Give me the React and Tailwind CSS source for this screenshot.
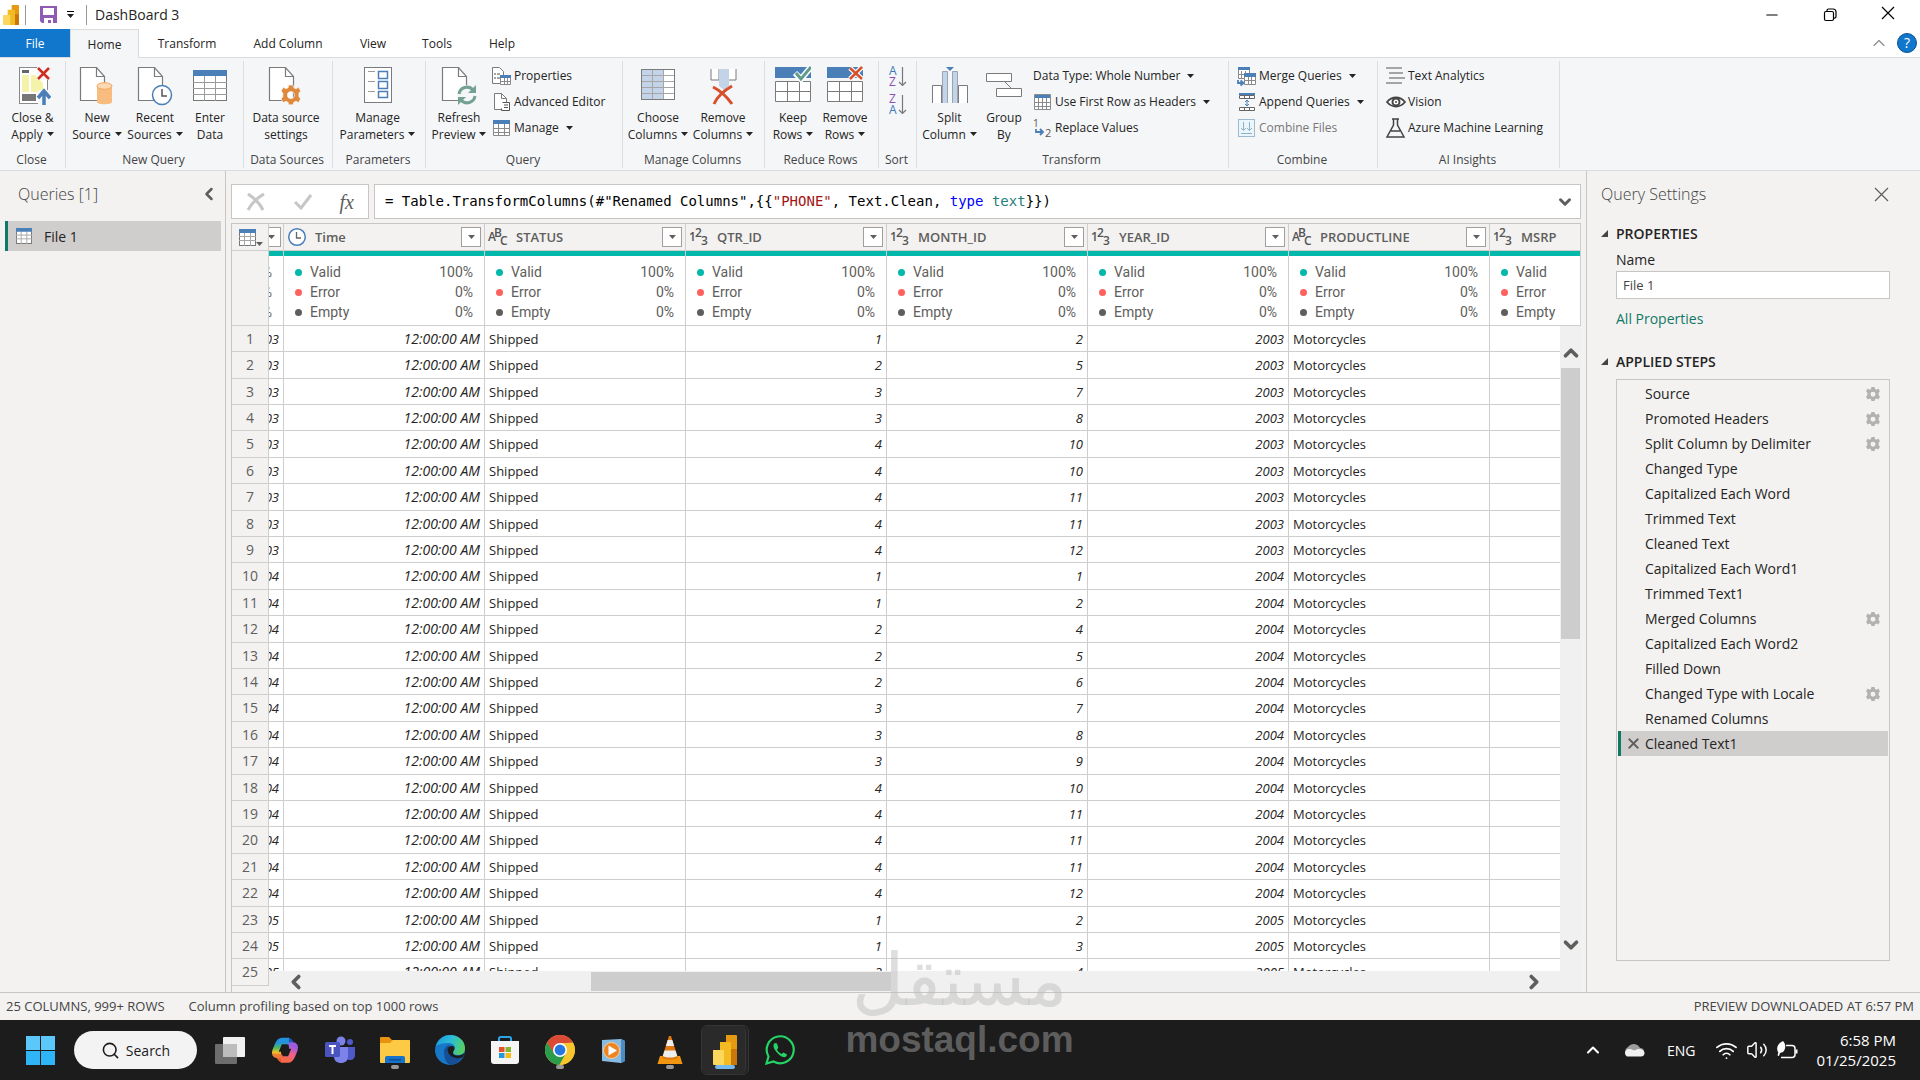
import clsx from 'clsx';
import { ChevronDown, ChevronLeft, ChevronRight, ChevronUp, Minus, Search, Volume2, Wifi, X } from 'lucide-react';

const MONTHS = [
    [1, 2, 2003], [2, 5, 2003], [3, 7, 2003], [3, 8, 2003], [4, 10, 2003],
    [4, 10, 2003], [4, 11, 2003], [4, 11, 2003], [4, 12, 2003], [1, 1, 2004],
    [1, 2, 2004], [2, 4, 2004], [2, 5, 2004], [2, 6, 2004], [3, 7, 2004],
    [3, 8, 2004], [3, 9, 2004], [4, 10, 2004], [4, 11, 2004], [4, 11, 2004],
    [4, 11, 2004], [4, 12, 2004], [1, 2, 2005], [1, 3, 2005], [2, 4, 2005],
];

const COLUMNS = [
    { name: 'Time', type: 'time' },
    { name: 'STATUS', type: 'text' },
    { name: 'QTR_ID', type: 'number' },
    { name: 'MONTH_ID', type: 'number' },
    { name: 'YEAR_ID', type: 'number' },
    { name: 'PRODUCTLINE', type: 'text' },
    { name: 'MSRP', type: 'number', last: true },
];

const STEPS = [
    { name: 'Source', gear: true },
    { name: 'Promoted Headers', gear: true },
    { name: 'Split Column by Delimiter', gear: true },
    { name: 'Changed Type' },
    { name: 'Capitalized Each Word' },
    { name: 'Trimmed Text' },
    { name: 'Cleaned Text' },
    { name: 'Capitalized Each Word1' },
    { name: 'Trimmed Text1' },
    { name: 'Merged Columns', gear: true },
    { name: 'Capitalized Each Word2' },
    { name: 'Filled Down' },
    { name: 'Changed Type with Locale', gear: true },
    { name: 'Renamed Columns' },
    { name: 'Cleaned Text1', selected: true },
];

/* ---------- small shared drawings ---------- */

function Caret({ className = '' }) {
    return (
        <svg width="7" height="4" viewBox="0 0 7 4" className={clsx('inline-block shrink-0', className)}>
            <path d="M0 0h7L3.5 4z" fill="currentColor" />
        </svg>
    );
}

function PowerBiLogo({ size }) {
    return (
        <svg width={size} height={size} viewBox="0 0 30 30">
            <path d="M16 0h10a1 1 0 0 1 1 1v28a1 1 0 0 1-1 1H16z" fill="#e59a12" />
            <path d="M21 14h6v15a1 1 0 0 1-1 1h-5z" fill="#c9760a" />
            <path d="M10 7h10a1 1 0 0 1 1 1v22H10z" fill="#f2bb22" />
            <path d="M3 15h10a1 1 0 0 1 1 1v14H4a1 1 0 0 1-1-1z" fill="#fbd75b" />
        </svg>
    );
}

function TableIcon({ size = 17 }) {
    return (
        <svg width={size} height={size} viewBox="0 0 17 17">
            <rect x="0.5" y="1.5" width="16" height="15" fill="#fff" stroke="#767676" />
            <path d="M0 7.5h17M0 11.5h17M5.5 4v13M11.5 4v13" stroke="#a6a6a6" />
            <rect width="17" height="4" fill="#4a7fb8" />
        </svg>
    );
}

function Page() {
    return (
        <>
            <path d="M1.5 1.5h16l8 9v24h-24z" fill="#fff" stroke="#7b7b7b" strokeWidth="1.2" />
            <path d="M17.5 1.5v9h8" fill="none" stroke="#7b7b7b" strokeWidth="1.2" />
        </>
    );
}

const GEAR = 'M7 0h4l.6 2.6 2 .9 2.3-1.5 2 3.4-1.6 1.9v3.4l1.6 1.9-2 3.4-2.3-1.2-2 .9L11 18H7l-.6-2.3-2-.9L2.1 16l-2-3.4 1.600-1.900V7.300L.1 5.400l2-3.400 2.300 1.500 2-.9zM9 6a3.200 3.200 0 1 0 0 6.400A3.200 3.200 0 1 0 9 6z';

function Gear({ size = 14, color = '#b3b1af' }) {
    return (
        <svg width={size} height={size} viewBox="0 0 18 18">
            <path d={GEAR} fill={color} fillRule="evenodd" />
        </svg>
    );
}

/* ---------- large ribbon drawings ---------- */

const BIG_ICONS = {
    close: (
        <>
            <rect x="4.500" y="1.500" width="28" height="36" fill="#fff" stroke="#8a8a8a" />
            <rect x="7" y="4" width="7" height="3" fill="#666" />
            <path d="M7 9h7v17H7zM16 9h4l8 8v9H16z" fill="#f5f3a9" />
            <rect x="7" y="28" width="14" height="7" fill="#777" />
            <path d="M22 0h14v14H22zM23 24h13v15H23z" fill="#f4f6f8" />
            <path d="M23 2l11 11M34 2L23 13" stroke="#d02b20" strokeWidth="2.500" />
            <path d="M29 39V26M23 32l6-7 6 7" stroke="#4a7fb8" strokeWidth="3.500" fill="none" />
        </>
    ),
    source: (
        <>
            <Page />
            <path d="M18 20v16c0 3 15 3 15 0V20" fill="#f8bd7e" />
            <ellipse cx="25.500" cy="20" rx="7.500" ry="3.300" fill="#fbd9b3" stroke="#f2a65c" />
        </>
    ),
    recent: (
        <>
            <Page />
            <circle cx="25" cy="29" r="9.500" fill="#fff" stroke="#4a7fb8" strokeWidth="1.500" />
            <path d="M25 23v7h5" stroke="#555" strokeWidth="1.500" fill="none" />
        </>
    ),
    enter: (
        <>
            <rect x="1.500" y="5.500" width="33" height="29" fill="#fff" stroke="#767676" />
            <path d="M1 16.500h34M1 22.500h34M1 28.500h34M12.500 10v25M23.500 10v25" stroke="#9b9b9b" />
            <rect x="1" y="4" width="34" height="6" fill="#4a7fb8" />
        </>
    ),
    gear: (
        <>
            <Page />
            <path d={GEAR} fill="#e0893a" fillRule="evenodd" transform="translate(13 19) scale(1.1)" stroke="#f4f6f8" strokeWidth="0.600" />
        </>
    ),
    params: (
        <>
            <rect x="4.500" y="1.500" width="27" height="35" fill="#fff" stroke="#7b7b7b" />
            <path d="M8 5.500h7M8 15.500h7M8 25.500h7" stroke="#9b9b9b" />
            <path d="M18.500 5.500h9v7h-9zM18.500 15.500h9v7h-9zM18.500 25.500h9v6h-9z" fill="#fff" stroke="#4a7fb8" strokeWidth="1.500" />
        </>
    ),
    refresh: (
        <>
            <Page />
            <circle cx="26" cy="29" r="10" fill="#f4f6f8" />
            <path d="M18 28a8 8 0 0 1 14-4M34 30a8 8 0 0 1-14 4" stroke="#74a191" strokeWidth="3" fill="none" />
            <path d="M35 19v8h-8zM17 39v-8h8z" fill="#74a191" />
        </>
    ),
    choose: (
        <>
            <rect x="1.500" y="3.500" width="33" height="30" fill="#fff" stroke="#7b7b7b" />
            <path d="M2 4h22v29H2z" fill="#c3d4e8" />
            <path d="M2 9.500h32M2 15.500h32M2 21.500h32M2 27.500h32M12.500 4v29M23.500 4v29" stroke="#a6a6a6" />
            <rect x="1.500" y="3.500" width="33" height="30" fill="none" stroke="#7b7b7b" />
        </>
    ),
    removeCols: (
        <>
            <path d="M6 3v11h8V3M31 3v11h-8V3" fill="#fff" stroke="#7b7b7b" />
            <path d="M14 3h10v17l-5 4-5-4z" fill="#c3d4e8" />
            <path d="M8 21c6 3 14 10 19 17M27 20C20 24 12 31 9 38" stroke="#d6502c" strokeWidth="3" fill="none" />
        </>
    ),
    keepRows: (
        <>
            <rect x="0" y="1" width="36" height="11" fill="#4a7fb8" />
            <path d="M.5 15.500h35v20H.5zM.5 25.500h35M12.500 15.500v20M24.500 15.500v20" fill="#fff" stroke="#7b7b7b" />
            <path d="M20 7l6 6L36 1" stroke="#fff" strokeWidth="6" fill="none" />
            <path d="M21 7l5 6L36 1" stroke="#5f9c8a" strokeWidth="3" fill="none" />
        </>
    ),
    removeRows: (
        <>
            <rect x="0" y="1" width="36" height="11" fill="#4a7fb8" />
            <path d="M.5 15.500h35v20H.5zM.5 25.500h35M12.500 15.500v20M24.500 15.500v20" fill="#fff" stroke="#7b7b7b" />
            <path d="M23 2l12 11M35 1L23 13" stroke="#fff" strokeWidth="5" fill="none" />
            <path d="M23 2l12 11M35 1L23 13" stroke="#d6502c" strokeWidth="2.500" fill="none" />
        </>
    ),
    split: (
        <>
            <path d="M.5 37V19.500h9V37M35.500 37V19.500h-9V37" fill="#fff" stroke="#7b7b7b" />
            <path d="M10.500 37V5.500h5V37M20.500 37V5.500h5V37" fill="#c3d4e8" stroke="#9aa5b1" />
            <path d="M14 1h8l-4 4z" fill="#4a7fb8" />
        </>
    ),
    group: (
        <>
            <path d="M.5 7.500h25v8H.5zM10.500 22.500h25v8h-25z" fill="#fff" stroke="#7b7b7b" />
            <path d="M19 16l6 6" stroke="#7b7b7b" />
        </>
    ),
};

/* ---------- small ribbon drawings ---------- */

const SMALL_ICONS = {
    props: (
        <>
            <path d="M.5.5h7l4 4v12H.5z" fill="#fff" stroke="#7b7b7b" />
            <path d="M2 7h2M2 11h2M5 7h3M5 11h3" stroke="#888" strokeWidth="1.500" />
            <path d="M8.500 9.500h10v8h-10zM8 14.500h10M12.500 11v7M15.500 11v7" fill="#fff" stroke="#8a8a8a" />
            <path d="M8 8h11v3H8z" fill="#4a7fb8" />
        </>
    ),
    editor: (
        <>
            <path d="M2.500.5h7l5 5v11h-12z" fill="#fff" stroke="#7b7b7b" />
            <path d="M9.500.5v5h5" fill="none" stroke="#7b7b7b" />
            <path d="M10.500 9.500h7v8h-8v-2" fill="#fff" stroke="#555" />
            <path d="M12 12h4M12 14.500h4" stroke="#555" />
        </>
    ),
    manage: (
        <>
            <path d="M1.500 3.500h16v13h-16zM1 9.500h17M1 13.500h17M6.500 4v13M12.500 4v13" fill="#fff" stroke="#8a8a8a" />
            <path d="M1 1h17v4H1z" fill="#4a7fb8" />
        </>
    ),
    headers: (
        <>
            <path d="M1.500 1.500h16v15h-16zM1 9.500h17M1 13.500h17M5.500 4v13M9.500 4v13M13.500 4v13" fill="#fff" stroke="#8a8a8a" />
            <path d="M2 2h15v3H2z" fill="#4a7fb8" />
        </>
    ),
    replace: (
        <>
            <text x="0" y="8" fontSize="10" fill="#555">1</text>
            <text x="12" y="18" fontSize="11" fill="#555">2</text>
            <path d="M3 10v3h6M7 10l3 3-3 3" fill="none" stroke="#4a7fb8" strokeWidth="1.800" />
        </>
    ),
    merge: (
        <>
            <path d="M1.500 2.500h11v9h-11zM1 7.500h11M4.500 4v8M8.500 4v8" fill="#fff" stroke="#8a8a8a" />
            <path d="M1 0h12v3H1z" fill="#4a7fb8" />
            <path d="M7.500 8.500h11v9h-11zM7 13.500h12M11.500 8v9M14.500 8v9" fill="#fff" stroke="#8a8a8a" />
            <path d="M7 6h12v4H7z" fill="#4a7fb8" />
            <path d="M1 13v3h4M3.500 13.500l3 2.500-3 2.500" fill="none" stroke="#4a7fb8" strokeWidth="1.800" />
        </>
    ),
    append: (
        <>
            <path d="M2.500 2.500h15v3h-15zM2.500 14.500h15v3h-15zM7.500 2v4M12.500 2v4M7.500 14v4M12.500 14v4" fill="#fff" stroke="#666" />
            <path d="M2 0h16v2H2z" fill="#4a7fb8" />
            <path d="M10 7v6M8 9l2-2 2 2M8 11l2 2 2-2" fill="none" stroke="#4a7fb8" />
        </>
    ),
    combine: (
        <>
            <rect x="1.500" y="0.500" width="16" height="17" fill="#eaf5fc" stroke="#9db9cc" />
            <path d="M6.500 3v8M12.500 3v8M4 9l2.500 2.500L9 9M10 9l2.500 2.500L15 9M4 14.500h11" fill="none" stroke="#8fb0c6" />
        </>
    ),
    text: <path d="M0 1h16M3 6h14M3 11h16M0 16h16" stroke="#8a8a8a" strokeWidth="1.500" />,
    vision: (
        <>
            <path d="M1 9c5-6 13-6 18 0-5 6-13 6-18 0z" fill="#fff" stroke="#444" strokeWidth="1.800" />
            <circle cx="10" cy="9" r="3.500" fill="#fff" stroke="#444" strokeWidth="2" />
            <circle cx="10" cy="9" r="1" fill="#444" />
        </>
    ),
    flask: (
        <path d="M6 0h7M7.500 0v6L1 18h17L11.500 6V0M5 12h9" fill="none" stroke="#444" strokeWidth="1.500" />
    ),
};

function BigButton({ icon, lines, caret, className = 'w-14' }) {
    return (
        <button type="button" className={clsx('flex flex-col items-center pt-[3px]', className)}>
            <svg width="36" height="40" viewBox="0 0 36 40" className="mb-[3px]">
                {BIG_ICONS[icon]}
            </svg>
            <span className="leading-[17px] whitespace-nowrap">{lines[0]}</span>
            <span className="flex items-center gap-1 leading-[17px] whitespace-nowrap">
                {lines[1]}
                {caret && <Caret />}
            </span>
        </button>
    );
}

function SmallButton({ icon, label, caret, disabled }) {
    return (
        <button
            type="button"
            disabled={disabled}
            className={clsx('flex h-[26px] items-center gap-[3px] whitespace-nowrap', disabled && 'text-[#797775]')}
        >
            {icon && (
                <svg width="19" height="18" viewBox="0 0 19 18" className="overflow-visible">
                    {SMALL_ICONS[icon]}
                </svg>
            )}
            {label}
            {caret && <Caret className="ml-1" />}
        </button>
    );
}

function Group({ label, className, align = 'justify-center', children }) {
    return (
        <section className={clsx('flex h-[107px] flex-col border-r border-[#dcdee0]', className)}>
            <div className={clsx('flex flex-1 pt-0.5', align)}>{children}</div>
            <div className="flex h-4 items-center justify-center pr-0.5 leading-4 whitespace-nowrap text-[#444]">{label}</div>
        </section>
    );
}

function SortIcon({ first, second, firstColor, secondColor }) {
    return (
        <svg width="18" height="22" viewBox="0 0 18 22" fontSize="12">
            <text x="0" y="9" fill={firstColor}>{first}</text>
            <text x="0" y="20" fill={secondColor}>{second}</text>
            <path d="M13.500 1v18M10 16l3.500 3.500L17 16" fill="none" stroke="#777" strokeWidth="1.200" />
        </svg>
    );
}

function TitleBar() {
    return (
        <header className="flex h-[29px] items-center bg-white pr-[3px] pl-px">
            <PowerBiLogo size={20} />
            <span className="ml-1 h-5 w-px bg-[#999]" />
            <button type="button" aria-label="Save" className="ml-3.5">
                <svg width="17" height="17" viewBox="0 0 17 17">
                    <path d="M0 0h17v17H2l-2-2z" fill="#8e5bb5" />
                    <path d="M3 2h11v7H3zM4 12h9v5h-2v-3H8v3H4z" fill="#fff" />
                </svg>
            </button>
            <button type="button" aria-label="Customize toolbar" className="ml-2.5 flex flex-col items-center gap-0.5">
                <span className="h-px w-[7px] bg-black" />
                <Caret />
            </button>
            <span className="ml-3 h-5 w-px bg-[#999]" />
            <h1 className="ml-2 text-[14px]">DashBoard 3</h1>
            <div className="ml-auto flex">
                <button type="button" aria-label="Minimize" className="flex w-[58px] justify-center">
                    <Minus size={18} strokeWidth={1.4} color="#000" />
                </button>
                <button type="button" aria-label="Restore" className="flex w-[58px] items-center justify-center">
                    <svg width="14" height="14" viewBox="0 0 14 14" fill="none" stroke="#000" strokeWidth="1.200">
                        <rect x="1.500" y="3.500" width="9" height="9" rx="1.500" />
                        <path d="M4 3.500V2.500a1.500 1.500 0 0 1 1.500-1.500H10a3 3 0 0 1 3 3v4.500A1.500 1.500 0 0 1 11 10" />
                    </svg>
                </button>
                <button type="button" aria-label="Close" className="flex w-[58px] justify-center">
                    <svg width="14" height="14" viewBox="0 0 14 14">
                        <path d="M1 1l12 12M13 1L1 13" stroke="#000" strokeWidth="1.200" />
                    </svg>
                </button>
            </div>
        </header>
    );
}

function Tabs() {
    const tab = 'flex h-full items-center justify-center pt-0.5';
    return (
        <nav className="flex h-[29px] items-stretch border-b border-[#d9dbdd] bg-white">
            <button type="button" className={clsx(tab, 'w-[70px] bg-[#1177cc] text-white')}>File</button>
            <div className="-mb-px flex h-[29px]">
                <button type="button" className={clsx(tab, 'w-[69px] border-x border-t border-[#d9dbdd] bg-[#f4f6f8]')}>Home</button>
            </div>
            <button type="button" className={clsx(tab, 'w-[96px]')}>Transform</button>
            <button type="button" className={clsx(tab, 'w-[106px]')}>Add Column</button>
            <button type="button" className={clsx(tab, 'w-[64px]')}>View</button>
            <button type="button" className={clsx(tab, 'w-[64px]')}>Tools</button>
            <button type="button" className={clsx(tab, 'w-[66px]')}>Help</button>
            <div className="ml-auto flex items-center gap-2 pr-[3px]">
                <ChevronUp size={20} strokeWidth={1.3} className="text-[#888]" />
                <button type="button" className="size-5 rounded-full border border-[#0b4f94] bg-[#1177cc] text-[14px] leading-[18px] text-white">?</button>
            </div>
        </nav>
    );
}

function Ribbon() {
    return (
        <div className="flex h-[113px] items-center border-b border-[#d9dbdd] bg-[#f4f6f8]">
            <Group label="Close" className="w-[66px]">
                <BigButton icon="close" lines={['Close &', 'Apply']} caret />
            </Group>
            <Group label="New Query" className="w-[178px]" align="justify-start">
                <BigButton icon="source" lines={['New', 'Source']} caret className="w-[62px]" />
                <BigButton icon="recent" lines={['Recent', 'Sources']} caret className="w-[54px]" />
                <BigButton icon="enter" lines={['Enter', 'Data']} />
            </Group>
            <Group label="Data Sources" className="w-[89px]" align="justify-start">
                <BigButton icon="gear" lines={['Data source', 'settings']} className="w-[84px]" />
            </Group>
            <Group label="Parameters" className="w-[93px]" align="justify-start">
                <BigButton icon="params" lines={['Manage', 'Parameters']} caret className="w-[89px]" />
            </Group>
            <Group label="Query" className="w-[197px]" align="justify-start">
                <BigButton icon="refresh" lines={['Refresh', 'Preview']} caret className="w-[66px]" />
                <div>
                    <SmallButton icon="props" label="Properties" />
                    <SmallButton icon="editor" label="Advanced Editor" />
                    <SmallButton icon="manage" label="Manage" caret />
                </div>
            </Group>
            <Group label="Manage Columns" className="w-[142px]" align="justify-start">
                <BigButton icon="choose" lines={['Choose', 'Columns']} caret className="w-[70px]" />
                <BigButton icon="removeCols" lines={['Remove', 'Columns']} caret className="w-[60px]" />
            </Group>
            <Group label="Reduce Rows" className="w-[114px]" align="justify-start">
                <BigButton icon="keepRows" lines={['Keep', 'Rows']} caret />
                <BigButton icon="removeRows" lines={['Remove', 'Rows']} caret className="w-12" />
            </Group>
            <Group label="Sort" className="w-[38px]">
                <div className="flex flex-col gap-1.5 pt-[3px]">
                    <button type="button" aria-label="Sort ascending" className="h-[22px]">
                        <SortIcon first="A" second="Z" firstColor="#3f78b5" secondColor="#8e4fb0" />
                    </button>
                    <button type="button" aria-label="Sort descending" className="h-[22px]">
                        <SortIcon first="Z" second="A" firstColor="#8e4fb0" secondColor="#3f78b5" />
                    </button>
                </div>
            </Group>
            <Group label="Transform" className="w-[312px]" align="justify-start">
                <BigButton icon="split" lines={['Split', 'Column']} caret className="w-[65px]" />
                <BigButton icon="group" lines={['Group', 'By']} className="w-11" />
                <div className="ml-[7px]">
                    <SmallButton label="Data Type: Whole Number" caret />
                    <SmallButton icon="headers" label="Use First Row as Headers" caret />
                    <SmallButton icon="replace" label="Replace Values" />
                </div>
            </Group>
            <Group label="Combine" className="w-[149px]" align="justify-start">
                <div className="ml-2">
                    <SmallButton icon="merge" label="Merge Queries" caret />
                    <SmallButton icon="append" label="Append Queries" caret />
                    <SmallButton icon="combine" label="Combine Files" disabled />
                </div>
            </Group>
            <Group label="AI Insights" className="w-[182px]" align="justify-start">
                <div className="ml-2">
                    <SmallButton icon="text" label="Text Analytics" />
                    <SmallButton icon="vision" label="Vision" />
                    <SmallButton icon="flask" label="Azure Machine Learning" />
                </div>
            </Group>
        </div>
    );
}

function QueriesPane() {
    return (
        <aside className="w-[226px] shrink-0 border-r border-[#c8c6c4]">
            <div className="flex h-[50px] items-center justify-between pr-1.5 pb-1 pl-[18px]">
                <h2 className="text-[16px] font-light text-[#444]">Queries [1]</h2>
                <ChevronLeft size={20} strokeWidth={3} className="text-[#605e5c]" />
            </div>
            <button type="button" className="ml-[5px] flex h-[30px] w-[216px] items-center gap-3 border-l-3 border-[#117865] bg-[#d0cecd] pl-2 text-[14px]">
                <TableIcon size={16} />
                File 1
            </button>
        </aside>
    );
}

function FormulaBar() {
    return (
        <div className="flex h-[35px] gap-[5px]">
            <div className="flex w-[138px] items-center justify-between border border-[#c8c6c4] bg-white px-3.5">
                <button type="button" aria-label="Cancel">
                    <svg width="20" height="18" viewBox="0 0 20 18">
                        <path d="M2 1c6 4 12 10 15 16M18 1C11 5 5 11 2 17" fill="none" stroke="#c8c6c4" strokeWidth="3" />
                    </svg>
                </button>
                <button type="button" aria-label="Commit">
                    <svg width="18" height="18" viewBox="0 0 18 18">
                        <path d="M1 9l6 6L17 2" fill="none" stroke="#c8c6c4" strokeWidth="3" />
                    </svg>
                </button>
                <button type="button" aria-label="Insert step" className="font-['Liberation_Serif',serif] text-[20px] leading-6 text-[#605e5c] italic">fx</button>
            </div>
            <div className="flex flex-1 items-center justify-between border border-[#c8c6c4] bg-white pr-1.5 pl-2.5">
                <code className="font-['DejaVu_Sans_Mono',monospace] text-[14px] whitespace-pre text-black">
                    {'= Table.TransformColumns(#"Renamed Columns",{{'}
                    <span className="text-[#a31515]">"PHONE"</span>
                    {', Text.Clean, '}
                    <span className="text-[#0000ff]">type</span>
                    <span className="text-[#267f79]"> text</span>
                    {'}})'}
                </code>
                <ChevronDown size={18} strokeWidth={4} className="text-[#605e5c]" />
            </div>
        </div>
    );
}

function TypeIcon({ type }) {
    if (type === 'time') {
        return (
            <svg width="20" height="20" viewBox="0 0 20 20">
                <circle cx="10" cy="10" r="8.300" fill="#fff" stroke="#4a7fb8" strokeWidth="1.500" />
                <path d="M9.500 5v6H14" fill="none" stroke="#666" strokeWidth="1.300" />
            </svg>
        );
    }
    const chars = type === 'text' ? ['A', 'B', 'C'] : ['1', '2', '3'];
    return (
        <svg width="20" height="20" viewBox="0 0 20 20" fontSize="12" fontWeight="600" fill="#555">
            <text x="0" y="14">{chars[0]}</text>
            <text x="6" y="10">{chars[1]}</text>
            <text x="12" y="18">{chars[2]}</text>
        </svg>
    );
}

function FilterButton() {
    return (
        <button type="button" aria-label="Filter" className="flex h-5 w-5 shrink-0 items-center justify-center border border-[#a19f9d] bg-white text-[#605e5c]">
            <Caret />
        </button>
    );
}

function Quality({ last }) {
    const rows = [
        ['Valid', '100%', 'bg-[#01b8aa]'],
        ['Error', '0%', 'bg-[#fd625e]'],
        ['Empty', '0%', 'bg-[#605e5c]'],
    ];
    return (
        <div className="border-t-5 border-[#01b8aa] pt-1.5 pr-[11px] pl-[11px]">
            {rows.map(([label, value, color]) => (
                <div key={label} className="flex h-5 items-center">
                    <span className={clsx('mr-2 size-[7px] rounded-full', color)} />
                    <span>{label}</span>
                    {!last && <span className="ml-auto">{value}</span>}
                </div>
            ))}
        </div>
    );
}

function DataGrid() {
    const cell = 'border-r border-b border-[#d0cecd] p-0';
    const clipped = 'flex justify-end overflow-hidden whitespace-nowrap';
    return (
        <div className="relative mt-1 min-h-0 flex-1 overflow-hidden border-t border-l border-[#c8c6c4]">
            <table className="w-full table-fixed border-separate border-spacing-0 text-[13px] leading-5 text-[#252423]">
                <colgroup>
                    <col className="w-[37px]" />
                    <col className="w-[15px]" />
                    <col className="w-[201px]" />
                    <col className="w-[201px]" />
                    <col className="w-[201px]" />
                    <col className="w-[201px]" />
                    <col className="w-[201px]" />
                    <col className="w-[201px]" />
                    <col />
                </colgroup>
                <thead>
                    <tr className="h-[27px] text-[#605e5c]">
                        <td className={cell}>
                            <button type="button" aria-label="Table menu" className="flex w-full items-end justify-center pl-0.5 text-[#605e5c]">
                                <TableIcon size={17} />
                                <Caret />
                            </button>
                        </td>
                        <td className={cell}>
                            <div className={clsx(clipped, 'pr-0.5')}><FilterButton /></div>
                        </td>
                        {COLUMNS.map((col) => (
                            <th key={col.name} scope="col" className={clsx(cell, 'text-left font-semibold')}>
                                <div className="flex items-center gap-2 pr-[3px] pl-[3px]">
                                    <TypeIcon type={col.type} />
                                    <span className="flex-1">{col.name}</span>
                                    {!col.last && <FilterButton />}
                                </div>
                            </th>
                        ))}
                    </tr>
                    <tr className="h-[75px] bg-white align-top font-[Roboto] text-[14px] text-[#605e5c]">
                        <td className={clsx(cell, 'bg-[#f3f2f1]')} />
                        <td className={cell}>
                            <div className="border-t-5 border-[#01b8aa] pt-1.5 pr-[11px]">
                                <div className={clipped}>%</div>
                                <div className={clipped}>%</div>
                                <div className={clipped}>%</div>
                            </div>
                        </td>
                        {COLUMNS.map((col) => (
                            <td key={col.name} className={cell}><Quality last={col.last} /></td>
                        ))}
                    </tr>
                </thead>
                <tbody className="bg-white">
                    {MONTHS.map(([qtr, month, year], i) => (
                        <tr key={i} className={clsx(i % 5 === 1 || i % 5 === 4 ? 'h-[27px]' : 'h-[26px]')}>
                            <th scope="row" className={clsx(cell, 'bg-[#f3f2f1] text-center text-[14px] font-normal text-[#605e5c]')}>{i + 1}</th>
                            <td className={clsx(cell, 'italic')}>
                                <div className={clsx(clipped, 'pr-1')}>{String(year).slice(2)}</div>
                            </td>
                            <td className={clsx(cell, 'pr-1 text-right text-[14px] italic')}>12:00:00 AM</td>
                            <td className={clsx(cell, 'pl-1')}>Shipped</td>
                            <td className={clsx(cell, 'pr-1 text-right italic')}>{qtr}</td>
                            <td className={clsx(cell, 'pr-1 text-right italic')}>{month}</td>
                            <td className={clsx(cell, 'pr-1 text-right italic')}>{year}</td>
                            <td className={clsx(cell, 'pl-1')}>Motorcycles</td>
                            <td className={cell} />
                        </tr>
                    ))}
                </tbody>
            </table>

            {/* Scroll bars lie over the last rows and the right edge */}
            <div className="absolute top-[102px] right-0 bottom-5 flex w-[21px] flex-col items-center bg-[#f0f0f0] pt-4 text-[#605e5c]">
                <ChevronUp size={22} strokeWidth={4} />
                <div className="mt-1 h-[271px] w-[19px] bg-[#cdcdcd]" />
                <ChevronDown size={22} strokeWidth={4} className="mt-auto mb-4" />
            </div>
            <div className="absolute right-0 bottom-0 left-[37px] flex h-[21px] items-center bg-[#f0f0f0] pr-9 pl-4 text-[#605e5c]">
                <ChevronLeft size={22} strokeWidth={4} />
                <div className="ml-[284px] h-[19px] w-[300px] bg-[#cdcdcd]" />
                <ChevronRight size={22} strokeWidth={4} className="ml-auto" />
            </div>
        </div>
    );
}

function SectionTitle({ children }) {
    return (
        <h3 className="flex h-5 items-center gap-2 text-[14px] font-semibold text-[#252423]">
            <svg width="7" height="7" viewBox="0 0 7 7">
                <path d="M7 0v7H0z" fill="#444" />
            </svg>
            {children}
        </h3>
    );
}

function SettingsPane() {
    return (
        <aside className="flex w-[334px] shrink-0 flex-col border-l border-[#c8c6c4] pl-3.5 text-[14px]">
            <div className="flex h-[50px] items-center justify-between pr-[31px] pb-1">
                <h2 className="text-[16px] font-light text-[#444]">Query Settings</h2>
                <button type="button" aria-label="Close settings">
                    <svg width="15" height="15" viewBox="0 0 15 15">
                        <path d="M1 1l13 13M14 1L1 14" stroke="#605e5c" strokeWidth="1.200" />
                    </svg>
                </button>
            </div>
            <div className="mt-0.5 flex flex-1 flex-col pb-[31px]">
                <SectionTitle>PROPERTIES</SectionTitle>
                <div className="mr-[30px] ml-[15px] flex flex-col items-start">
                    <label htmlFor="query-name" className="mt-[7px] mb-px leading-5">Name</label>
                    <input
                        id="query-name"
                        type="text"
                        defaultValue="File 1"
                        className="h-7 w-full border border-[#c8c6c4] bg-white px-1.5 text-[13px] text-[#444]"
                    />
                    <a href="#all" className="mt-2.5 leading-5 text-[#117865]">All Properties</a>
                </div>
                <div className="mt-[22px] mb-2">
                    <SectionTitle>APPLIED STEPS</SectionTitle>
                </div>
                <ul className="mr-[30px] ml-[15px] flex-1 border border-[#c8c6c4] p-px">
                    {STEPS.map((step) => (
                        <li
                            key={step.name}
                            className={clsx(
                                'flex h-[25px] items-center border-l-3 pr-2',
                                step.selected ? 'border-[#117865] bg-[#d0cecd]' : 'border-transparent',
                            )}
                        >
                            <span className="flex w-6 justify-center">
                                {step.selected && <X size={17} strokeWidth={2.5} className="text-[#605e5c]" />}
                            </span>
                            {step.name}
                            {step.gear && <span className="ml-auto"><Gear /></span>}
                        </li>
                    ))}
                </ul>
            </div>
        </aside>
    );
}

/* ---------- task bar ---------- */

const APPS = [
    {
        name: 'Task view',
        art: (
            <>
                <rect x="8" y="2" width="22" height="20" rx="1" fill="#f1f1f1" />
                <rect x="0" y="9" width="22" height="20" rx="1" fill="#6d6d6d" />
                <rect x="8" y="9" width="14" height="13" fill="#bdbdbd" />
            </>
        ),
    },
    {
        name: 'Copilot',
        art: (
            <>
                <defs>
                    <linearGradient id="copilotLeft" x1="0" y1="0" x2="0" y2="1">
                        <stop offset="0.100" stopColor="#2390e0" />
                        <stop offset="0.500" stopColor="#4fb85c" />
                        <stop offset="0.800" stopColor="#f0c32a" />
                        <stop offset="1" stopColor="#ee7a35" />
                    </linearGradient>
                    <linearGradient id="copilotRight" x1="0.800" y1="0" x2="0.300" y2="1">
                        <stop offset="0" stopColor="#9a5be0" />
                        <stop offset="0.500" stopColor="#f0608c" />
                        <stop offset="1" stopColor="#f5694a" />
                    </linearGradient>
                </defs>
                <g fill="none" strokeWidth="6.500" strokeLinejoin="round">
                    <path d="M18 6c2.500 0 2.500 4 5 5" stroke="#1c54b8" />
                    <path d="M7 20c3 0 3 4 5 4.500" stroke="#e8582f" />
                    <path d="M19 6h-7c-2 0-3 1.500-4 4l-2.500 6c-1 3 0 4 2 4H11" stroke="url(#copilotLeft)" />
                    <path d="M11 24.500h7c2 0 3-1.500 4-4l2.500-6c1-3 0-4-2-4H19" stroke="url(#copilotRight)" />
                </g>
            </>
        ),
    },
    {
        name: 'Teams',
        art: (
            <>
                <circle cx="25" cy="7" r="3" fill="#5059c9" />
                <path d="M20 12h10v8c0 3-2 5-5 5s-5-2-5-5z" fill="#5059c9" />
                <circle cx="16" cy="6" r="4.500" fill="#7b83eb" />
                <path d="M9 12h14v9c0 5-3 7-7 7s-7-2-7-7z" fill="#7b83eb" />
                <rect x="0" y="7" width="15" height="15" rx="1.500" fill="#4b53bc" />
                <path d="M4 11h7M7.500 11v8" stroke="#fff" strokeWidth="2" />
            </>
        ),
    },
    {
        name: 'File Explorer',
        running: true,
        art: (
            <>
                <path d="M0 3a1 1 0 0 1 1-1h8l3 3h17a1 1 0 0 1 1 1v6H0z" fill="#e8930f" />
                <path d="M0 8h10l3-3h16a1 1 0 0 1 1 1v21a1 1 0 0 1-1 1H1a1 1 0 0 1-1-1z" fill="#fcca45" />
                <path d="M5 28v-5a2 2 0 0 1 2-2h16a2 2 0 0 1 2 2v5z" fill="#1673c9" />
                <path d="M9 24h12v1.500H9z" fill="#0d4f94" />
            </>
        ),
    },
    {
        name: 'Edge',
        art: (
            <>
                <defs>
                    <linearGradient id="edgeTop" x1="0" y1="0.200" x2="1" y2="0.500">
                        <stop offset="0" stopColor="#1f9be0" />
                        <stop offset="0.500" stopColor="#2cbdd6" />
                        <stop offset="1" stopColor="#55cf63" />
                    </linearGradient>
                </defs>
                <circle cx="15" cy="15" r="15" fill="#1878c8" />
                <path d="M1 11C3 4 9 0 15 0c9 0 15 6 15 13 0 5-3 7-7 7-3 0-5-1-5-3 0-1 2-2 2-4 0-3-3-5-7-5-5 0-9 1-12 3z" fill="url(#edgeTop)" />
                <path d="M9 17c0-4 3-7 6-7-3 3-2 11 6 12 3 0 5 0 7-1-3 5-7 9-13 9-4-2-6-7-6-13z" fill="#174f97" />
                <path d="M12.500 14c1-3.500 6-4 7-1 0 2-1.500 3-1.500 5s2 2.500 5 2.500 5-1 7-3l-2 4.500c-2 1-5 1.500-7 1-5-.7-8.500-4-8.500-9z" fill="#1c1c1c" />
            </>
        ),
    },
    {
        name: 'Store',
        art: (
            <>
                <path d="M9 7V3.500A1.500 1.500 0 0 1 10.500 2h9A1.500 1.500 0 0 1 21 3.500V7" fill="none" stroke="#2aa3e8" strokeWidth="2" />
                <path d="M1 6h28v20a3 3 0 0 1-3 3H4a3 3 0 0 1-3-3z" fill="#f5f5f5" />
                <path d="M9 12h5.500v5H9z" fill="#e8502b" />
                <path d="M15.500 12H21v5h-5.500z" fill="#86b82e" />
                <path d="M9 18h5.500v5H9z" fill="#2198e0" />
                <path d="M15.500 18H21v5h-5.500z" fill="#f9bc15" />
            </>
        ),
    },
    {
        name: 'Chrome',
        running: true,
        art: (
            <>
                <circle cx="15" cy="15" r="15" fill="#f7c52c" />
                <path d="M2 7.500A15 15 0 0 1 28 7.500L15 8.500 8.500 18.500z" fill="#db4a37" />
                <path d="M2 7.500A15 15 0 0 0 14.500 30L21 18.500 9 18.500z" fill="#2a9d4c" />
                <path d="M15 8h13.200A15 15 0 0 1 14.500 30L21 18.500z" fill="#f7c52c" />
                <circle cx="15" cy="15" r="7" fill="#fff" />
                <circle cx="15" cy="15" r="5.400" fill="#2478e0" />
            </>
        ),
    },
    {
        name: 'Media player',
        art: (
            <>
                <path d="M2 5l19-1 4 2v20l-4 2-19-2z" fill="#86bbe4" />
                <path d="M21 4l4 2v20l-4 2z" fill="#4d8bc2" />
                <circle cx="11.500" cy="15.500" r="8" fill="#ec8421" stroke="#f7d0a0" />
                <path d="M8.500 10.500l8.500 5-8.500 5z" fill="#fff" />
            </>
        ),
    },
    {
        name: 'VLC',
        running: true,
        art: (
            <>
                <path d="M5 21h20l2.500 8h-25z" fill="#f2960f" />
                <path d="M14 1h2l7 22c-3 2-13 2-16 0z" fill="#e07a10" />
                <path d="M12.700 5h4.600l1.800 6h-8.200z" fill="#eee" />
                <path d="M9.500 15.500h11l1.700 5.500c-4 2-10.500 2-14.400 0z" fill="#eee" />
            </>
        ),
    },
    { name: 'Power BI', active: true },
    {
        name: 'WhatsApp',
        art: (
            <>
                <path d="M1.500 28.500l2-7A13.500 13.500 0 1 1 8.500 26.500z" fill="none" stroke="#25d366" strokeWidth="2.200" />
                <path d="M10 8c-2 1-2 4 0 7s5 6 8 7c2 .5 4-.5 4-2.500l-3.500-2-2 1.500c-2-1-4-3-4.500-4.500l1.300-1.800L12 8.500z" fill="#25d366" />
            </>
        ),
    },
];

function TaskBar() {
    return (
        <footer className="flex h-[60px] items-center bg-[#1c1c1c] pr-6 text-[15px] text-white">
            <button type="button" aria-label="Start" className="ml-[26px]">
                <svg width="29" height="29" viewBox="0 0 29 29">
                    <path d="M0 0h14v14H0zM15 0h14v14H15z" fill="#5cc8fa" />
                    <path d="M0 15h14v14H0zM15 15h14v14H15z" fill="#2fb4f5" />
                </svg>
            </button>
            <button type="button" className="mr-[5px] ml-[19px] flex h-[38px] w-[123px] items-center justify-center gap-1.5 rounded-full bg-[#f3f3f3] text-[14px] text-[#1b1b1b]">
                <Search size={19} strokeWidth={2} />
                Search
            </button>
            {APPS.map((app) => (
                <button key={app.name} type="button" aria-label={app.name} className="relative flex h-[60px] w-[55px] items-center justify-center">
                    {app.active ? (
                        <span className="flex h-[50px] w-12 rounded-md border border-[#353535] bg-[#232323]">
                            <span className="flex w-11 items-center justify-center rounded-md border-r border-[#353535] bg-[#2a2a2a] pl-1">
                                <PowerBiLogo size={30} />
                            </span>
                        </span>
                    ) : (
                        <svg width="30" height="30" viewBox="0 0 30 30">{app.art}</svg>
                    )}
                    {app.running && <span className="absolute bottom-[11px] h-1 w-2 rounded-full bg-[#9a9a9a]" />}
                    {app.active && <span className="absolute bottom-[11px] h-1 w-5 rounded-full bg-[#76b9ed]" />}
                </button>
            ))}
            <div className="ml-auto flex items-center">
                <ChevronUp size={20} strokeWidth={2.5} />
                <svg width="22" height="16" viewBox="0 0 22 16" className="ml-5">
                    <path d="M5 14a5 5 0 0 1 0-9 7 7 0 0 1 12 1 4 4 0 0 1 0 8z" fill="#9d9d9d" />
                    <path d="M4 14.500a4 4 0 0 1 0-7c3-1 5 0 7 1l4-1.500c4-.5 7 2 6.500 4.500a3.500 3.500 0 0 1-3.500 3z" fill="#f0f0f0" />
                </svg>
                <span className="ml-[22px] text-[14px]">ENG</span>
                <Wifi size={23} strokeWidth={1.8} className="ml-5" />
                <Volume2 size={22} strokeWidth={1.6} className="ml-2" />
                <svg width="22" height="18" viewBox="0 0 22 18" className="ml-2">
                    <path d="M10 4.500h6a3 3 0 0 1 3 3v6a3 3 0 0 1-3 3H5" fill="none" stroke="#fff" strokeWidth="1.500" />
                    <path d="M19.500 8.500h2v4h-2z" fill="#fff" />
                    <path d="M7 0c3 3 3 8 0 11l-3 1-1 3-1.500-.500.800-3C0 8 1 3 7 0z" fill="#fff" />
                </svg>
                <div className="ml-[18px] text-right leading-5">
                    <div>6:58 PM</div>
                    <div>01/25/2025</div>
                </div>
            </div>
        </footer>
    );
}

function Watermark() {
    return (
        <div className="pointer-events-none absolute bottom-5 left-[845px] flex w-[229px] flex-col items-center whitespace-nowrap">
            <span lang="ar" dir="rtl" className="font-['DejaVu_Sans',sans-serif] text-[72px] leading-[80px] text-[#bebebe]/50">مستقل</span>
            <span className="font-['Liberation_Sans',sans-serif] text-[37px] leading-10 font-bold text-[#8a8a8a]/60">mostaql.com</span>
        </div>
    );
}

export default function App() {
    return (
        <div className="relative flex h-screen flex-col overflow-hidden bg-[#f3f2f1] font-['Open_Sans',sans-serif] text-[12px] text-[#252423]">
            <TitleBar />
            <Tabs />
            <Ribbon />
            <div className="flex min-h-0 flex-1">
                <QueriesPane />
                <main className="flex min-w-0 flex-1 flex-col px-[5px] pt-[13px]">
                    <FormulaBar />
                    <DataGrid />
                </main>
                <SettingsPane />
            </div>
            <div className="flex h-7 items-center border-t border-[#c8c6c4] px-1.5 text-[13px] text-[#444]">
                <span>25 COLUMNS, 999+ ROWS</span>
                <span className="ml-6">Column profiling based on top 1000 rows</span>
                <span className="ml-auto">PREVIEW DOWNLOADED AT 6:57 PM</span>
            </div>
            <TaskBar />
            <Watermark />
        </div>
    );
}
